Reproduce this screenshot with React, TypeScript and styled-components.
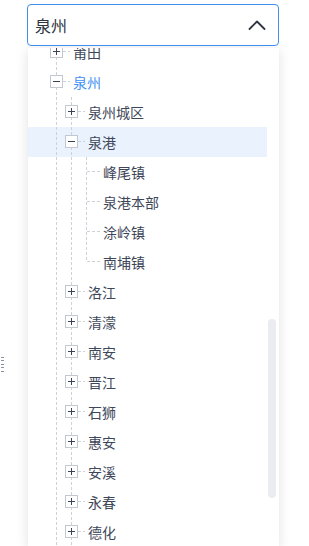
import React from "react";
import styled, { createGlobalStyle } from "styled-components";

const GlobalStyle = createGlobalStyle`
  html, body {
    margin: 0;
    padding: 0;
    background: #fff;
    font-family: "Noto Sans CJK SC", "Noto Sans", sans-serif;
  }
`;

const LINE = "#cdd1d8";

const Page = styled.div`
  position: relative;
  height: 546px;
  overflow: hidden;
  padding: 4px 0 0 27px;
  box-sizing: border-box;
`;

const DragHandle = styled.div`
  position: absolute;
  left: 1px;
  top: 357px;
  width: 3px;
  height: 15px;
  background: repeating-linear-gradient(to bottom, #8792a4 0 1px, transparent 1px 3.4px);
`;

const Select = styled.div`
  width: 252px;
  display: flex;
  flex-direction: column;
`;

const Input = styled.div`
  position: relative;
  z-index: 2;
  height: 42px;
  box-sizing: border-box;
  border: 1px solid #3f8ef0;
  border-radius: 4px;
  background: #fff;
  display: flex;
  align-items: center;
  justify-content: space-between;
  padding: 0 12px 0 7px;
  font-size: 16px;
  color: #2f3542;
`;

const Panel = styled.div`
  margin: 2px 0 0 1px;
  height: 500px;
  display: flex;
  background: #fff;
  box-shadow: 0 2px 12px rgba(0, 0, 0, 0.12);
`;

const Viewport = styled.div`
  flex: 1;
  overflow: hidden;
`;

const TreeList = styled.div`
  margin-top: -11px;
`;

const Row = styled.div<{ $active?: boolean }>`
  display: flex;
  height: 30px;
  padding-left: 22px;
  background: ${(p) => (p.$active ? "#e9f2fd" : "transparent")};
`;

const Guide = styled.div<{ $line: boolean }>`
  width: 15px;
  flex: none;
  background: ${(p) =>
    p.$line
      ? `repeating-linear-gradient(to bottom, ${LINE} 0 3px, transparent 3px 5px) 6px 0 / 1px 100% no-repeat`
      : "none"};
`;

const Joint = styled.div<{ $last: boolean; $leaf: boolean }>`
  position: relative;
  width: 23px;
  flex: none;

  &::before {
    content: "";
    position: absolute;
    left: 6px;
    top: 0;
    width: 1px;
    height: ${(p) => (p.$last ? "15px" : "30px")};
    background: repeating-linear-gradient(to bottom, ${LINE} 0 3px, transparent 3px 5px);
  }

  &::after {
    content: "";
    position: absolute;
    left: ${(p) => (p.$leaf ? "7px" : "13px")};
    right: 3px;
    top: 14px;
    height: 1px;
    background: repeating-linear-gradient(to right, ${LINE} 0 3px, transparent 3px 5px);
  }
`;

const ToggleBox = styled.span<{ $open: boolean }>`
  position: absolute;
  z-index: 1;
  left: 0;
  top: 8px;
  width: 13px;
  height: 13px;
  box-sizing: border-box;
  border: 1px solid #c3c8d0;
  background: #fff;

  &::before {
    content: "";
    position: absolute;
    left: 2px;
    top: 5px;
    width: 7px;
    height: 1px;
    background: #3a4355;
  }

  &::after {
    content: "";
    display: ${(p) => (p.$open ? "none" : "block")};
    position: absolute;
    left: 5px;
    top: 2px;
    width: 1px;
    height: 7px;
    background: #3a4355;
  }
`;

const Label = styled.span<{ $selected?: boolean }>`
  font-size: 14px;
  line-height: 30px;
  white-space: nowrap;
  color: ${(p) => (p.$selected ? "#3d8ff3" : "#3e4759")};
`;

const Track = styled.div`
  width: 12px;
  flex: none;
`;

const Thumb = styled.div`
  margin: 271px 0 0 1px;
  width: 8px;
  height: 179px;
  border-radius: 4px;
  background: #ebecef;
`;

type Node = {
  label: string;
  open?: boolean;
  children?: Node[];
  selected?: boolean;
  active?: boolean;
};

const collapsed = (label: string): Node => ({ label, children: [{ label: "" }] });

const tree: Node[] = [
  collapsed("莆田"),
  {
    label: "泉州",
    open: true,
    selected: true,
    children: [
      collapsed("泉州城区"),
      {
        label: "泉港",
        open: true,
        active: true,
        children: [
          { label: "峰尾镇" },
          { label: "泉港本部" },
          { label: "涂岭镇" },
          { label: "南埔镇" },
        ],
      },
      ...["洛江", "清濛", "南安", "晋江", "石狮", "惠安", "安溪", "永春", "德化", "金门"].map(collapsed),
    ],
  },
  collapsed("漳州"),
  collapsed("龙岩"),
];

type FlatRow = { node: Node; guides: boolean[]; last: boolean };

function flatten(nodes: Node[], guides: boolean[], out: FlatRow[]) {
  nodes.forEach((node, i) => {
    const last = i === nodes.length - 1;
    out.push({ node, guides, last });
    if (node.open && node.children) flatten(node.children, [...guides, !last], out);
  });
  return out;
}

const rows = flatten(tree, [], []);

const Chevron = () => (
  <svg width="18" height="12" viewBox="0 0 18 12" fill="none">
    <polyline points="1.5,10 9,2.5 16.5,10" stroke="#2f3542" strokeWidth="1.8" strokeLinecap="round" strokeLinejoin="round" />
  </svg>
);

const App: React.FC = () => {
  return (
    <>
      <GlobalStyle />
      <Page>
        <DragHandle />
        <Select>
          <Input>
            <span>泉州</span>
            <Chevron />
          </Input>
          <Panel>
            <Viewport>
              <TreeList>
                {rows.map(({ node, guides, last }, i) => {
                  const leaf = !node.children;
                  return (
                    <Row key={i} $active={node.active}>
                      {guides.map((g, j) => (
                        <Guide key={j} $line={g} />
                      ))}
                      <Joint $last={last} $leaf={leaf}>
                        {!leaf && <ToggleBox $open={!!node.open} />}
                      </Joint>
                      <Label $selected={node.selected}>{node.label}</Label>
                    </Row>
                  );
                })}
              </TreeList>
            </Viewport>
            <Track>
              <Thumb />
            </Track>
          </Panel>
        </Select>
      </Page>
    </>
  );
};

export default App;
